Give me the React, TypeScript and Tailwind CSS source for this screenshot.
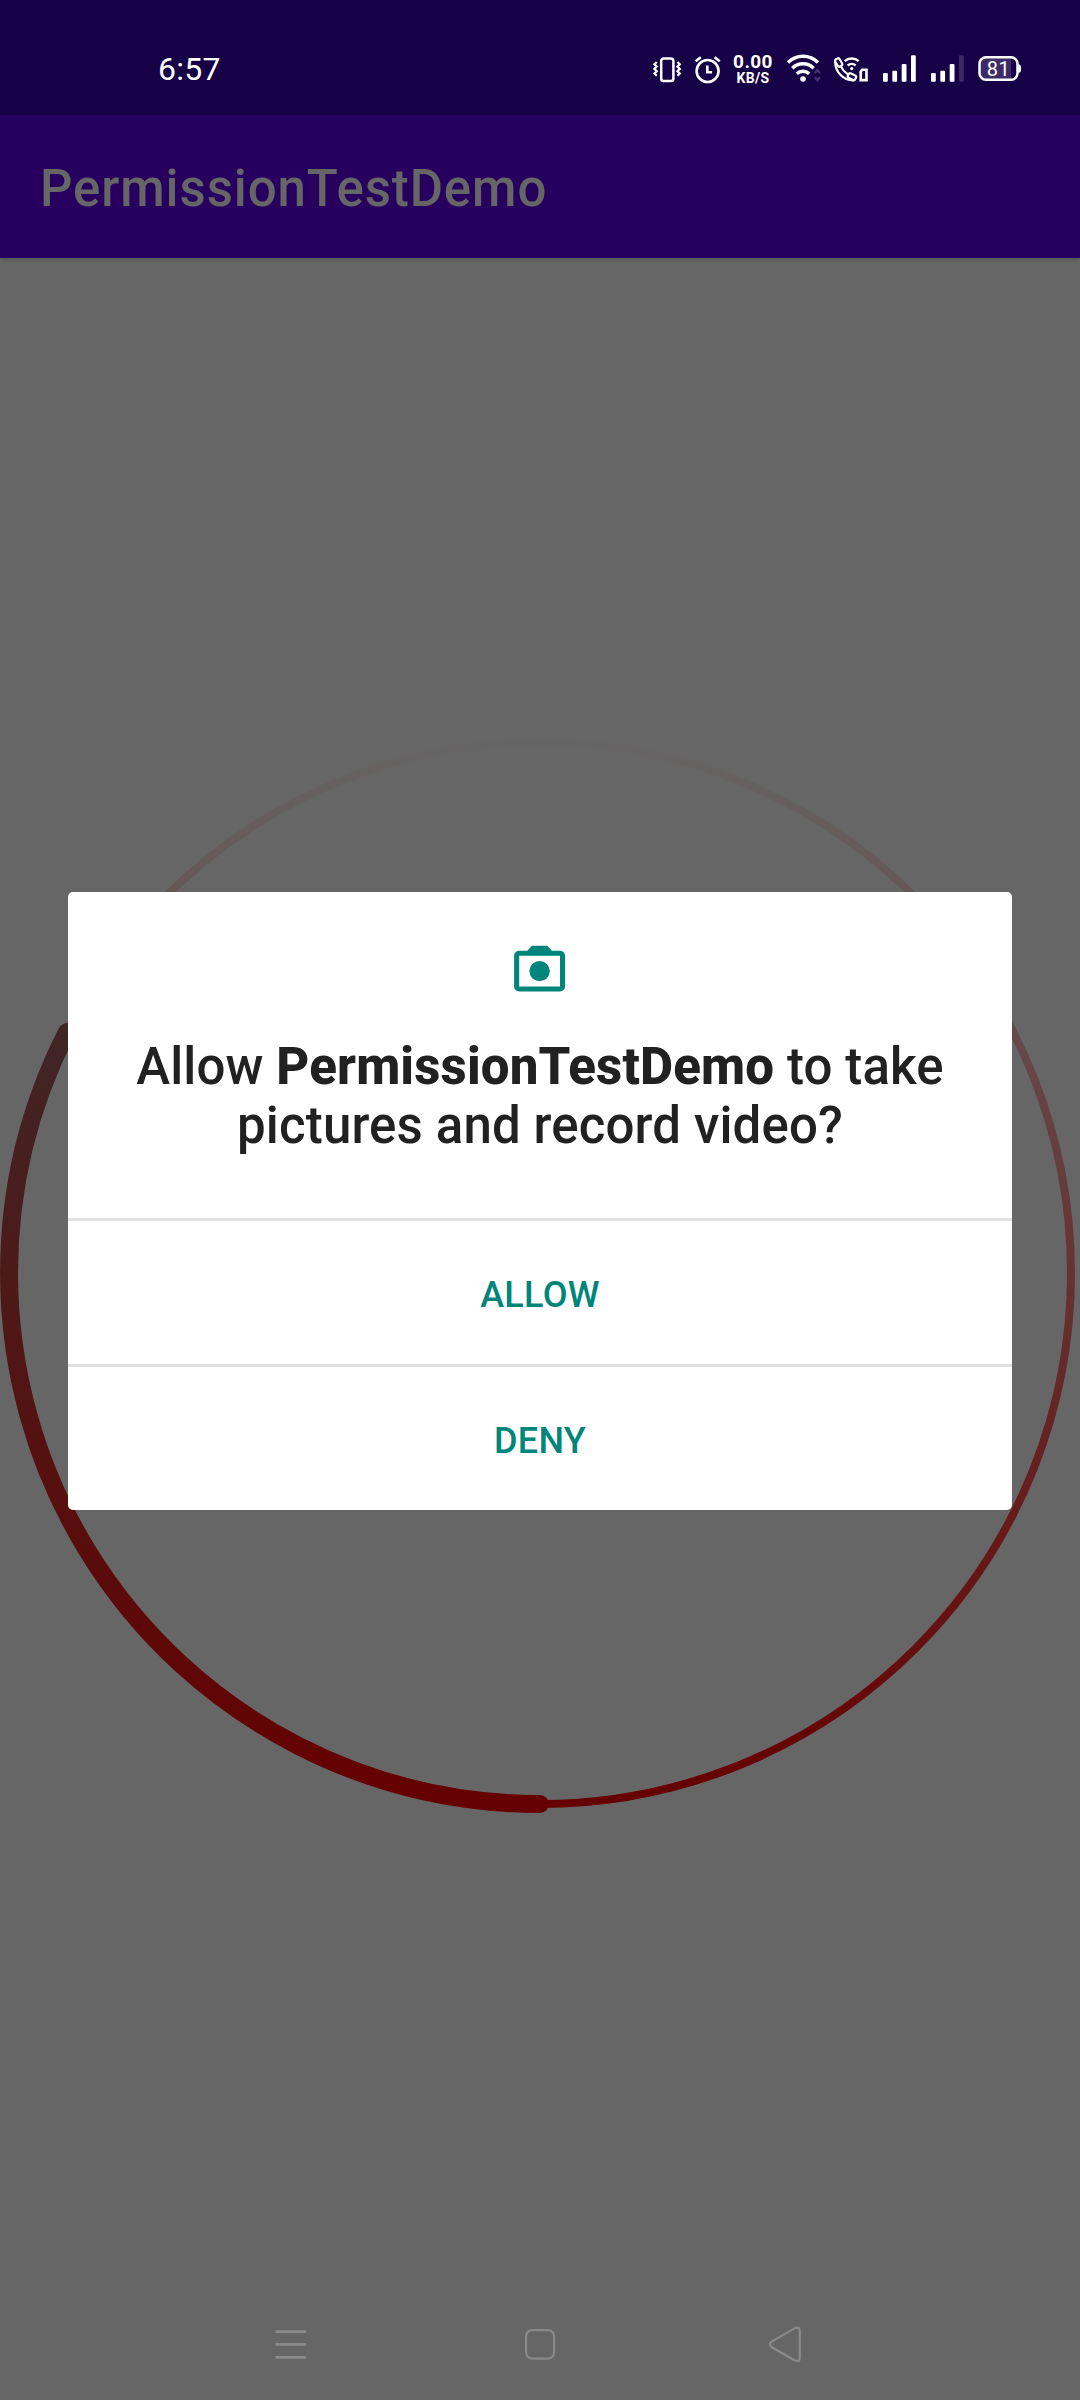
import React from "react";

const VibrateIcon = () => (
  <svg className="ml-[431px] h-[32px] w-[30px] shrink-0" viewBox="652 53 30 32" fill="none" stroke="#fff">
    <rect x="661.2" y="58.4" width="12.2" height="22.6" rx="2.6" strokeWidth="2.5" />
    <path d="M656.8 62l-2.4 2.3 2.4 2.3-2.4 2.3 2.4 2.3-2.4 2.3 2.4 2.3M677.4 62l2.4 2.3-2.4 2.3 2.4 2.3-2.4 2.3 2.4 2.3-2.4 2.3" strokeWidth="2.2" />
  </svg>
);

const AlarmIcon = () => (
  <svg className="ml-[12px] h-[32px] w-[28px] shrink-0" viewBox="694 53 28 32" fill="none" stroke="#fff">
    <circle cx="707.6" cy="71" r="11" strokeWidth="2.6" />
    <path d="M695.6 61.2l5.2-3.9M719.8 61.2l-5.2-3.9" strokeWidth="2.6" />
    <path d="M707.3 65.5v6.7h4.8" strokeWidth="2.6" />
  </svg>
);

const WifiIcon = () => (
  <svg className="ml-[12px] h-[32px] w-[36px] shrink-0" viewBox="786 53 36 32" fill="none" stroke="#fff">
    <path d="M788 62.4a21.5 21.5 0 0 1 30 0" strokeWidth="3.5" />
    <path d="M792.3 68.2a15 15 0 0 1 21.4 0" strokeWidth="3.5" />
    <path d="M796.8 73.8a9 9 0 0 1 12.4 0" strokeWidth="3.5" />
    <circle cx="803" cy="79" r="2.8" fill="#fff" stroke="none" />
    <path d="M814.8 73.2l2.6-3.1 2.6 3.1M814.8 77.2l2.6 3.1 2.6-3.1" stroke="#463370" strokeWidth="2.2" />
  </svg>
);

const WifiCallIcon = () => (
  <svg className="ml-[11px] h-[32px] w-[36px] shrink-0" viewBox="833 53 36 32" fill="none" stroke="#fff">
    <g strokeWidth="2.2" strokeLinecap="round">
      <rect x="836.2" y="58.4" width="5" height="8.2" rx="1.8" transform="rotate(-30 838.7 62.5)" />
      <rect x="847.8" y="74.2" width="8.2" height="5" rx="1.8" transform="rotate(28 851.9 76.7)" />
      <path d="M835.2 62.500C835.400 71.800 843.600 80.600 853 80.400" />
      <path d="M841 66.600q2.200 4.600 6.600 7.500" />
    </g>
    <path d="M844.700 61.200a10.500 10.500 0 0 1 14 0M847.700 65.500a6 6 0 0 1 8 0" strokeWidth="2.400" />
    <circle cx="851.700" cy="68.600" r="1.600" fill="#fff" stroke="none" />
    <path d="M860.700 71.600l1.500-1.900h4.300v10.400h-5.800z" strokeWidth="2.600" />
  </svg>
);

const bars = [
  { x: 1, y: 20, h: 8.7 },
  { x: 10.3, y: 17.7, h: 11 },
  { x: 19.7, y: 11, h: 17.7 },
  { x: 29, y: 2.3, h: 26.4 },
];

const SignalIcon = ({ level }: { level: number }) => (
  <svg className="h-[32px] w-[36px] shrink-0" viewBox="0 0 36 32">
    {bars.map((b, i) => (
      <rect key={b.x} x={b.x} y={b.y} width="4.8" height={b.h} rx="1" fill={i < level ? "#fff" : "#3c2964"} />
    ))}
  </svg>
);

const BatteryIcon = () => (
  <div className="relative ml-[12px] flex h-[32px] w-[44px] shrink-0">
    <svg className="absolute inset-0" width="44" height="32" viewBox="978 53 44 32">
      <path d="M985 58h26v21h-26a5 5 0 0 1-5-5v-11a5 5 0 0 1 5-5z" fill="#3d2a66" />
      <rect x="979.5" y="57.3" width="38" height="22.4" rx="6.5" fill="none" stroke="#fff" strokeWidth="2.5" />
      <path d="M1018.3 64q2.7.5 2.7 2.5v4q0 2-2.7 2.5z" fill="#fff" />
    </svg>
    <span className="relative w-[41px] pt-[5px] text-center text-[20px] leading-[22px] tracking-[0.5px]">81</span>
  </div>
);

const StatusBar = () => (
  <header className="flex h-[115px] items-start bg-[#160046] pt-[53px] text-white">
    <span className="ml-[158px] h-[32px] w-[63px] text-[32px] leading-[32px] tracking-[0.3px] whitespace-nowrap">6:57</span>
    <VibrateIcon />
    <AlarmIcon />
    <div className="ml-[10px] flex w-[42px] flex-col items-center font-bold">
      <span className="text-[19px] leading-[18px] tracking-[0.4px]">0.00</span>
      <span className="text-[14px] leading-[14px] tracking-[0.3px]">KB/S</span>
    </div>
    <WifiIcon />
    <WifiCallIcon />
    <div className="ml-[13px] flex gap-[12px]">
      <SignalIcon level={4} />
      <SignalIcon level={3} />
    </div>
    <BatteryIcon />
  </header>
);

/* Track and progress arc; both fade vertically across the ring's bounds. */
const ProgressRing = () => (
  <svg className="mt-[474px] h-[1082px] w-[1080px] shrink-0" viewBox="0 732 1080 1082" fill="none">
    <defs>
      <linearGradient id="track" gradientUnits="userSpaceOnUse" x1="0" y1="742" x2="0" y2="1804">
        <stop offset="0" stopColor="#666565" />
        <stop offset="1" stopColor="#660000" />
      </linearGradient>
      <linearGradient id="progress" gradientUnits="userSpaceOnUse" x1="0" y1="742" x2="0" y2="1804">
        <stop offset="0" stopColor="#333333" />
        <stop offset="1" stopColor="#660000" />
      </linearGradient>
    </defs>
    <circle cx="540" cy="1273" r="531" stroke="url(#track)" strokeWidth="8" />
    <path d="M540 1804A531 531 0 0 1 66.9 1032" stroke="url(#progress)" strokeWidth="18" strokeLinecap="round" />
  </svg>
);

const PermissionDialog = () => (
  <section
    role="dialog"
    className="absolute top-[892px] left-[68px] flex h-[618px] w-[944px] flex-col items-center rounded-[5px] bg-white"
  >
    <svg className="mt-[46px] h-[61.2px] w-[61.2px] shrink-0" viewBox="0 0 24 24">
      <path
        fill="#00857a"
        fillRule="evenodd"
        d="M9 3h6l1.83 2H20a2 2 0 0 1 2 2v12a2 2 0 0 1-2 2H4a2 2 0 0 1-2-2V7a2 2 0 0 1 2-2h3.17zM4 7v12h16V7z"
      />
      <circle cx="12" cy="13" r="4" fill="#00857a" />
    </svg>
    <h2 className="mt-[37.5px] h-[181px] text-center text-[51px] leading-[59.3px] font-medium tracking-[0.14px] whitespace-nowrap text-[#212121]">
      Allow <b className="font-extrabold">PermissionTestDemo</b> to take
      <br />
      pictures and record video?
    </h2>
    <button className="h-[146px] w-full border-t-[3px] border-[#e0e0e0] pt-[5px] text-[36px] font-medium tracking-[0.3px] text-[#00857a]">
      ALLOW
    </button>
    <button className="h-[146px] w-full border-t-[3px] border-[#e0e0e0] pt-[5px] text-[36px] font-medium tracking-[0.3px] text-[#00857a]">
      DENY
    </button>
  </section>
);

const NavigationBar = () => (
  <nav className="mt-auto flex h-[112px] items-center pl-[274px]">
    <svg width="34" height="38" viewBox="274 2325 34 38" stroke="#8a8a8a" strokeWidth="2.8">
      <path d="M275.6 2331.7h30.6M275.6 2344.3h30.6M275.6 2357.3h30.6" />
    </svg>
    <svg className="ml-[215px]" width="34" height="38" viewBox="523 2325 34 38" fill="none" stroke="#8a8a8a" strokeWidth="2.2">
      <rect x="526.1" y="2330.1" width="28" height="28.5" rx="6" />
    </svg>
    <svg className="ml-[210px]" width="36" height="38" viewBox="767 2325 36 38" fill="none" stroke="#8a8a8a" strokeWidth="2.2">
      <path d="M771.5 2341.6l22.5-13q5.7-2.7 5.8 1.7v28q-.1 4.4-5.8 1.7l-22.5-13q-3-2.7 0-5.4z" />
    </svg>
  </nav>
);

export default function App() {
  return (
    <main className="relative flex h-[2400px] w-[1080px] flex-col overflow-hidden bg-[#666666] font-[Roboto,sans-serif]">
      <StatusBar />
      <div className="relative flex h-[143px] shrink-0 items-center bg-[#27005f] pt-[5px] pl-[40px] shadow-[0_1px_5px_rgba(0,0,0,0.2)]">
        <h1 className="text-[51px] leading-[60px] font-medium tracking-[0.9px] text-[#666666]">PermissionTestDemo</h1>
      </div>
      <ProgressRing />
      <NavigationBar />
      <PermissionDialog />
    </main>
  );
}
